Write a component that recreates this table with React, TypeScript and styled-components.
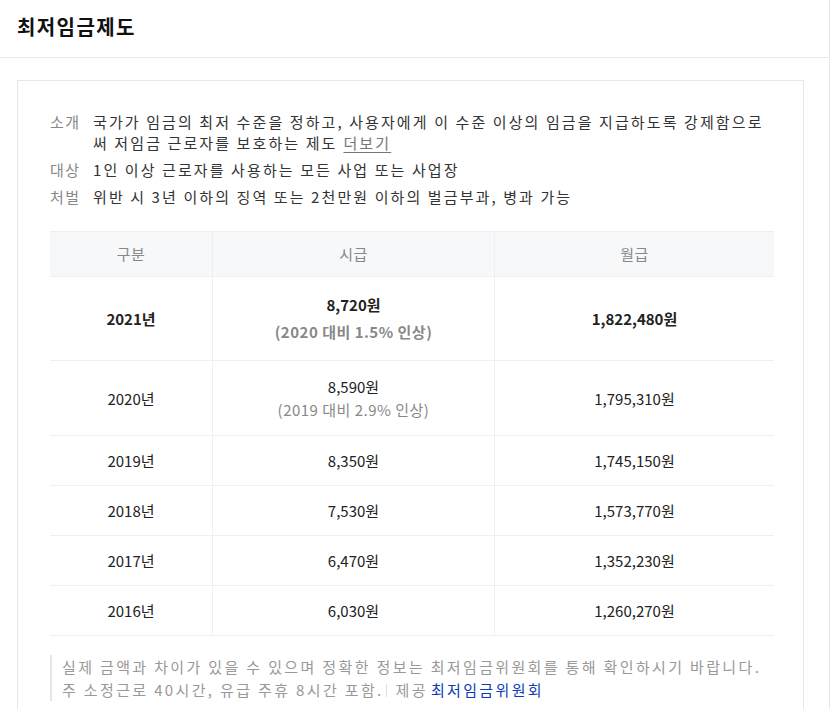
import React from "react";
import styled, { createGlobalStyle } from "styled-components";

const Global = createGlobalStyle`
  html, body { margin: 0; padding: 0; background: #fff; }
  body {
    font-family: "Noto Sans CJK KR", "Noto Sans", sans-serif;
    color: #222;
    -webkit-font-smoothing: antialiased;
  }
  * { box-sizing: border-box; }
`;

const Page = styled.div`
  width: 830px;
  min-height: 709px;
  border-right: 1px solid #e4e8ee;
`;

const Header = styled.header`
  height: 58px;
  border-bottom: 1px solid #e8ebef;
  display: flex;
  align-items: center;
  padding: 0 0 4px 17px;
`;

const Title = styled.h1`
  margin: 0;
  font-size: 20px;
  font-weight: 700;
  color: #111;
  letter-spacing: 1.4px;
`;

const Body = styled.div`
  padding: 22px 25px 0 17px;
`;

const Card = styled.section`
  border: 1px solid #e3e8ee;
  border-bottom: none;
  padding: 30px 29px 40px 32px;
`;

const InfoList = styled.dl`
  margin: 0 8px 0 0;
  display: grid;
  grid-template-columns: 43px 1fr;
  row-gap: 6px;
  font-size: 15px;
  line-height: 21px;
  letter-spacing: 2.1px;
`;

const Term = styled.dt`
  color: #888;
  margin: 0;
  letter-spacing: 1.5px;
`;

const Desc = styled.dd`
  margin: 0;
  color: #333;
`;

const More = styled.a`
  color: #777;
  text-decoration: underline;
  text-underline-offset: 3px;
  margin-left: 6px;
`;

const Table = styled.div`
  margin-top: 24px;
  border-top: 1px solid #eceef2;
  display: grid;
  grid-template-columns: 162px 282px 1fr;
  font-size: 15px;
  line-height: 23px;
`;

const HeadCell = styled.div`
  background: #f7f8fa;
  color: #888;
  text-align: center;
  padding: 10px 8px 11px;
  border-bottom: 1px solid #eef0f3;
  letter-spacing: 0.5px;
  & + & { border-left: 1px solid #eef0f3; }
`;

const Cell = styled.div<{ $pt: number; $pb: number; $bold?: boolean; $first?: boolean }>`
  text-align: center;
  padding: ${(p) => p.$pt}px 8px ${(p) => p.$pb}px;
  border-bottom: 1px solid #eef0f3;
  border-left: ${(p) => (p.$first ? "none" : "1px solid #eef0f3")};
  font-weight: ${(p) => (p.$bold ? 700 : 400)};
  color: #222;
  display: flex;
  flex-direction: column;
  justify-content: center;
`;

const Sub = styled.span<{ $bold?: boolean }>`
  color: #888;
  font-weight: ${(p) => (p.$bold ? 700 : 400)};
  margin-top: ${(p) => (p.$bold ? 4 : 0)}px;
  letter-spacing: 0.5px;
`;

const Note = styled.div`
  margin-top: 19px;
  border-left: 2px solid #e6e6e6;
  padding-left: 10px;
  font-size: 15px;
  line-height: 23px;
  letter-spacing: 2.35px;
  color: #999;
`;

const Divider = styled.span`
  display: inline-block;
  width: 1px;
  height: 13px;
  background: #e0e0e0;
  margin: 0 9px 0 2px;
  vertical-align: -1px;
`;

const Link = styled.a`
  color: #0c3db8;
  text-decoration: none;
  margin-left: 3px;
`;

type Row = { year: string; hourly: string; monthly: string; sub?: string; bold?: boolean; pt: number; pb: number };

const rows: Row[] = [
  { year: "2021년", hourly: "8,720원", sub: "(2020 대비 1.5% 인상)", monthly: "1,822,480원", bold: true, pt: 16, pb: 17 },
  { year: "2020년", hourly: "8,590원", sub: "(2019 대비 2.9% 인상)", monthly: "1,795,310원", pt: 14, pb: 14 },
  { year: "2019년", hourly: "8,350원", monthly: "1,745,150원", pt: 13, pb: 13 },
  { year: "2018년", hourly: "7,530원", monthly: "1,573,770원", pt: 13, pb: 13 },
  { year: "2017년", hourly: "6,470원", monthly: "1,352,230원", pt: 13, pb: 13 },
  { year: "2016년", hourly: "6,030원", monthly: "1,260,270원", pt: 13, pb: 13 },
];

export default function App() {
  return (
    <Page>
      <Global />
      <Header>
        <Title>최저임금제도</Title>
      </Header>
      <Body>
        <Card>
          <InfoList>
            <Term>소개</Term>
            <Desc>
              국가가 임금의 최저 수준을 정하고, 사용자에게 이 수준 이상의 임금을 지급하도록 강제함으로써 저임금 근로자를 보호하는 제도
              <More href="#">더보기</More>
            </Desc>
            <Term>대상</Term>
            <Desc>1인 이상 근로자를 사용하는 모든 사업 또는 사업장</Desc>
            <Term>처벌</Term>
            <Desc>위반 시 3년 이하의 징역 또는 2천만원 이하의 벌금부과, 병과 가능</Desc>
          </InfoList>
          <Table>
            <HeadCell>구분</HeadCell>
            <HeadCell>시급</HeadCell>
            <HeadCell>월급</HeadCell>
            {rows.map((r) => (
              <React.Fragment key={r.year}>
                <Cell $first $pt={r.pt} $pb={r.pb} $bold={r.bold}>{r.year}</Cell>
                <Cell $pt={r.pt} $pb={r.pb} $bold={r.bold}>
                  <span>{r.hourly}</span>
                  {r.sub && <Sub $bold={r.bold}>{r.sub}</Sub>}
                </Cell>
                <Cell $pt={r.pt} $pb={r.pb} $bold={r.bold}>{r.monthly}</Cell>
              </React.Fragment>
            ))}
          </Table>
          <Note>
            실제 금액과 차이가 있을 수 있으며 정확한 정보는 최저임금위원회를 통해 확인하시기 바랍니다.
            <br />
            주 소정근로 40시간, 유급 주휴 8시간 포함.<Divider />제공<Link href="#">최저임금위원회</Link>
          </Note>
        </Card>
      </Body>
    </Page>
  );
}
